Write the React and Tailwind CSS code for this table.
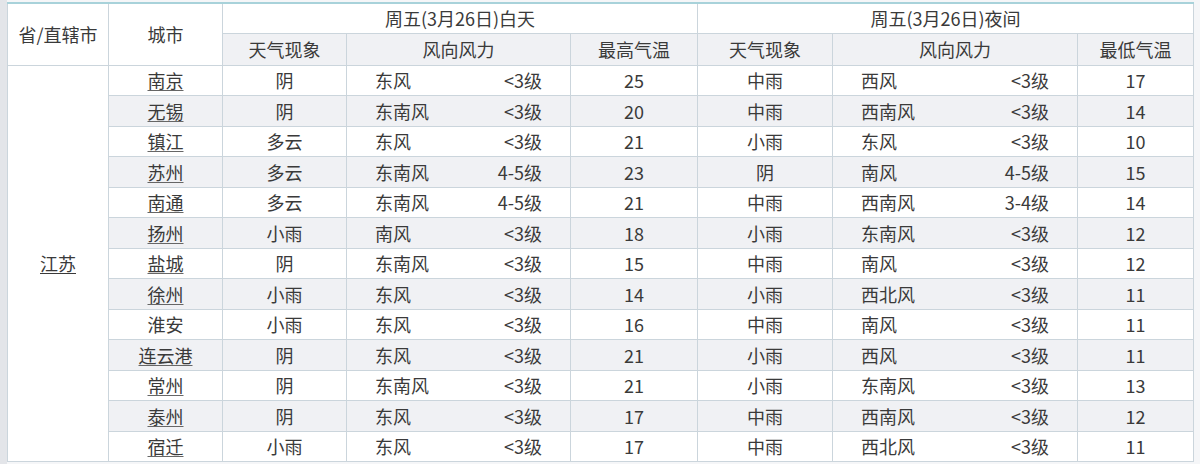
import React from 'react';

const rows = [
  ['南京', '阴', '东风', '<3级', 25, '中雨', '西风', '<3级', 17],
  ['无锡', '阴', '东南风', '<3级', 20, '中雨', '西南风', '<3级', 14],
  ['镇江', '多云', '东风', '<3级', 21, '小雨', '东风', '<3级', 10],
  ['苏州', '多云', '东南风', '4-5级', 23, '阴', '南风', '4-5级', 15],
  ['南通', '多云', '东南风', '4-5级', 21, '中雨', '西南风', '3-4级', 14],
  ['扬州', '小雨', '南风', '<3级', 18, '小雨', '东南风', '<3级', 12],
  ['盐城', '阴', '东南风', '<3级', 15, '中雨', '南风', '<3级', 12],
  ['徐州', '小雨', '东风', '<3级', 14, '小雨', '西北风', '<3级', 11],
  ['淮安', '小雨', '东风', '<3级', 16, '中雨', '南风', '<3级', 11],
  ['连云港', '阴', '东风', '<3级', 21, '小雨', '西风', '<3级', 11],
  ['常州', '阴', '东南风', '<3级', 21, '小雨', '东南风', '<3级', 13],
  ['泰州', '阴', '东风', '<3级', 17, '中雨', '西南风', '<3级', 12],
  ['宿迁', '小雨', '东风', '<3级', 17, '中雨', '西北风', '<3级', 11],
];

const cell = 'border border-[#cbd5dc] text-center font-normal p-0';

function Wind({ dir, level }) {
  return (
    <div className="flex justify-between px-[28px]">
      <span>{dir}</span>
      <span>{level}</span>
    </div>
  );
}

export default function App() {
  return (
    <div
      className="w-[1200px] h-[464px] bg-[#f5f6f8] flex overflow-hidden text-[18px] text-[#3a3a3a]"
      style={{ fontFamily: '"Noto Sans CJK SC", "Noto Sans", sans-serif' }}
    >
      <div className="w-[7px] h-full bg-[#e3e5e9] shrink-0" />
      <div className="pt-[2px]">
        <table className="border-collapse table-fixed bg-white border-t-2 border-t-[#a8d2da] leading-none">
          <colgroup>
            <col className="w-[101px]" />
            <col className="w-[114px]" />
            <col className="w-[124px]" />
            <col className="w-[224px]" />
            <col className="w-[127px]" />
            <col className="w-[135px]" />
            <col className="w-[245px]" />
            <col className="w-[116px]" />
          </colgroup>
          <thead>
            <tr className="h-[30px]">
              <th rowSpan={2} className={cell}>省/直辖市</th>
              <th rowSpan={2} className={cell}>城市</th>
              <th colSpan={3} className={cell}>周五(3月26日)白天</th>
              <th colSpan={3} className={cell}>周五(3月26日)夜间</th>
            </tr>
            <tr className="h-[32px] bg-[#f0f1f4]">
              <th className={cell}>天气现象</th>
              <th className={cell}>风向风力</th>
              <th className={cell}>最高气温</th>
              <th className={cell}>天气现象</th>
              <th className={cell}>风向风力</th>
              <th className={cell}>最低气温</th>
            </tr>
          </thead>
          <tbody>
            {rows.map((r, i) => (
              <tr key={r[0]} className={`h-[30.5px] ${i % 2 === 1 ? 'bg-[#f0f1f4]' : 'bg-white'}`}>
                {i === 0 && (
                  <td rowSpan={rows.length} className={`${cell} bg-white`}>
                    <span className="underline underline-offset-2">江苏</span>
                  </td>
                )}
                <td className={cell}>
                  <span className={r[0] === '淮安' ? '' : 'underline underline-offset-2 decoration-[#666]'}>{r[0]}</span>
                </td>
                <td className={cell}>{r[1]}</td>
                <td className={`${cell} text-left`}>
                  <Wind dir={r[2]} level={r[3]} />
                </td>
                <td className={cell}>{r[4]}</td>
                <td className={cell}>{r[5]}</td>
                <td className={`${cell} text-left`}>
                  <Wind dir={r[6]} level={r[7]} />
                </td>
                <td className={cell}>{r[8]}</td>
              </tr>
            ))}
          </tbody>
        </table>
      </div>
    </div>
  );
}
